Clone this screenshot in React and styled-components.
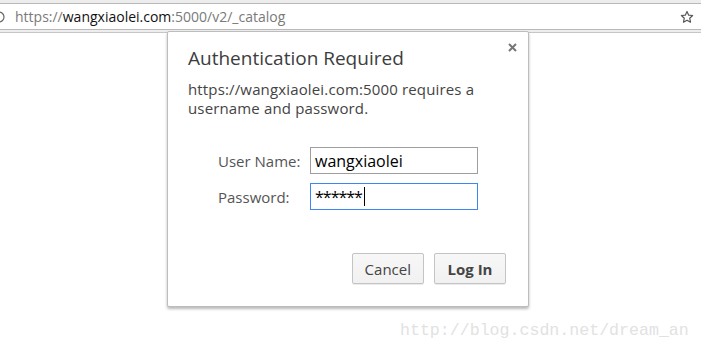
import React from "react"
import styled, { createGlobalStyle } from "styled-components"

const GlobalStyle = createGlobalStyle`
  html, body {
    margin: 0;
    padding: 0;
    background: #fff;
  }
  body {
    font-family: "Open Sans", "Noto Sans", sans-serif;
    width: 701px;
    height: 352px;
    overflow: hidden;
    position: relative;
  }
`

const Toolbar = styled.div`
  height: 33px;
  background: #ededed;
  border-bottom: 1px solid #c6c6c6;
  padding-top: 3px;
  box-sizing: border-box;
`

const Omnibox = styled.div`
  height: 27px;
  margin-left: -20px;
  margin-right: -20px;
  background: #fff;
  border: 1px solid #b9b9b9;
  box-sizing: border-box;
  display: flex;
  align-items: center;
  padding: 0 26px 0 12px;
  position: relative;
`

const InfoIcon = styled.svg`
  width: 12px;
  height: 12px;
  flex: none;
`

const Url = styled.div`
  margin-left: 10px;
  font-size: 14px;
  color: #7a7a7a;
  flex: 1;
  white-space: nowrap;
`

const Host = styled.span`
  color: #111;
`

const Star = styled.svg`
  width: 14px;
  height: 14px;
  flex: none;
`

const Dialog = styled.div`
  position: absolute;
  left: 167px;
  top: 31px;
  width: 362px;
  height: 276px;
  box-sizing: border-box;
  background: #fff;
  border: 1px solid #bdbdbd;
  border-radius: 2px;
  box-shadow: 0 2px 3px rgba(0, 0, 0, 0.28);
  padding: 14px 22px 22px 20px;
  display: flex;
  flex-direction: column;
`

const Close = styled.button`
  position: absolute;
  right: 9px;
  top: 8px;
  border: none;
  background: none;
  padding: 0;
  width: 14px;
  height: 14px;
  display: flex;
  align-items: center;
  justify-content: center;
`

const Title = styled.h1`
  margin: 0;
  font-size: 19px;
  font-weight: 400;
  color: #3d3d3d;
  line-height: 24px;
`

const Message = styled.p`
  margin: 10px 0 0;
  font-size: 15px;
  line-height: 19px;
  color: #444;
  letter-spacing: 0.15px;
`

const Form = styled.div`
  margin-top: 29px;
  padding-left: 30px;
  display: grid;
  grid-template-columns: 92px 168px;
  row-gap: 9px;
  align-items: center;
`

const Label = styled.label`
  font-size: 15px;
  color: #555;
`

const Field = styled.div`
  height: 27px;
  box-sizing: border-box;
  border: 1px solid ${p => (p.$focused ? "#3c87f5" : "#9e9e9e")};
  display: flex;
  align-items: center;
  padding: 0 4px;
  font-size: 16px;
  color: #000;
  letter-spacing: ${p => (p.$focused ? "-1px" : "0")};
`

const Caret = styled.span`
  display: inline-block;
  width: 1px;
  height: 19px;
  background: #000;
  margin-left: 2px;
`

const Buttons = styled.div`
  margin-top: auto;
  display: flex;
  justify-content: flex-end;
  gap: 10px;
`

const Button = styled.button`
  height: 31px;
  min-width: 72px;
  padding: 0 12px;
  box-sizing: border-box;
  border: 1px solid #c4c4c4;
  border-radius: 2px;
  background: linear-gradient(#f7f7f7, #f1f1f1);
  box-shadow: 0 1px 0 rgba(0, 0, 0, 0.08);
  font-family: inherit;
  font-size: 15px;
  font-weight: ${p => (p.$primary ? 700 : 400)};
  color: #444;
`

const Watermark = styled.div`
  position: absolute;
  left: 400px;
  top: 321px;
  font-family: "Liberation Mono", monospace;
  font-size: 16.6px;
  color: #e2e2e2;
`

export default function App() {
  return (
    <>
      <GlobalStyle />
      <Toolbar>
        <Omnibox>
          <InfoIcon viewBox="0 0 12 12">
            <circle cx="6" cy="6" r="5" fill="none" stroke="#666" strokeWidth="1.2" />
          </InfoIcon>
          <Url>
            https://<Host>wangxiaolei.com</Host>:5000/v2/_catalog
          </Url>
          <Star viewBox="0 0 24 24">
            <path
              d="M12 2.5l2.9 6.3 6.8.7-5.1 4.6 1.5 6.8L12 17.4l-6.1 3.5 1.5-6.8-5.1-4.6 6.8-.7z"
              fill="none"
              stroke="#555"
              strokeWidth="2"
              strokeLinejoin="round"
            />
          </Star>
        </Omnibox>
      </Toolbar>
      <Dialog>
        <Close aria-label="Close">
          <svg width="9" height="9" viewBox="0 0 9 9">
            <path d="M1 1l7 7M8 1l-7 7" stroke="#777" strokeWidth="2" />
          </svg>
        </Close>
        <Title>Authentication Required</Title>
        <Message>
          https://wangxiaolei.com:5000 requires a
          <br />
          username and password.
        </Message>
        <Form>
          <Label>User Name:</Label>
          <Field>wangxiaolei</Field>
          <Label>Password:</Label>
          <Field $focused>
            ******
            <Caret />
          </Field>
        </Form>
        <Buttons>
          <Button>Cancel</Button>
          <Button $primary>Log In</Button>
        </Buttons>
      </Dialog>
      <Watermark>http://blog.csdn.net/dream_an</Watermark>
    </>
  )
}
